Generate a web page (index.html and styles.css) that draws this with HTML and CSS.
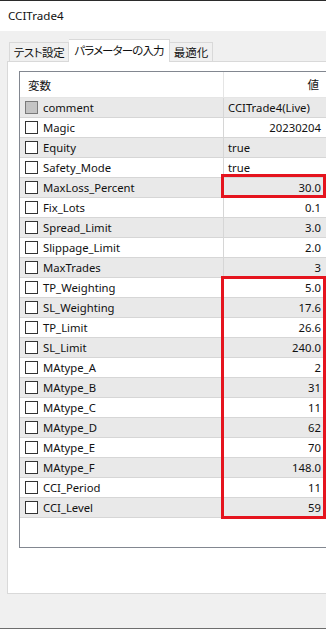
FILE: index.html
```html
<!DOCTYPE html>
<html lang="ja">
<head>
  <meta charset="UTF-8" />
  <title>CCITrade4</title>
  <link rel="stylesheet" href="styles.css">
</head>
<body>
  <div class="window">
    <div class="titlebar">CCITrade4</div>
    <div class="tabs">
      <div class="tab tab-test">テスト設定</div>
      <div class="tab tab-param active">パラメーターの入力</div>
      <div class="tab tab-opt">最適化</div>
    </div>
    <div class="panel">
      <div class="list">
        <div class="list-head">
          <div class="col-name">変数</div>
          <div class="col-value">値</div>
        </div>
        <div class="row alt"><div class="col-name"><span class="check on"></span>comment</div><div class="col-value left">CCITrade4(Live)</div></div>
        <div class="row"><div class="col-name"><span class="check"></span>Magic</div><div class="col-value">20230204</div></div>
        <div class="row alt"><div class="col-name"><span class="check"></span>Equity</div><div class="col-value left">true</div></div>
        <div class="row"><div class="col-name"><span class="check"></span>Safety_Mode</div><div class="col-value left">true</div></div>
        <div class="row alt"><div class="col-name"><span class="check"></span>MaxLoss_Percent</div><div class="col-value">30.0</div></div>
        <div class="row"><div class="col-name"><span class="check"></span>Fix_Lots</div><div class="col-value">0.1</div></div>
        <div class="row alt"><div class="col-name"><span class="check"></span>Spread_Limit</div><div class="col-value">3.0</div></div>
        <div class="row"><div class="col-name"><span class="check"></span>Slippage_Limit</div><div class="col-value">2.0</div></div>
        <div class="row alt"><div class="col-name"><span class="check"></span>MaxTrades</div><div class="col-value">3</div></div>
        <div class="row"><div class="col-name"><span class="check"></span>TP_Weighting</div><div class="col-value">5.0</div></div>
        <div class="row alt"><div class="col-name"><span class="check"></span>SL_Weighting</div><div class="col-value">17.6</div></div>
        <div class="row"><div class="col-name"><span class="check"></span>TP_Limit</div><div class="col-value">26.6</div></div>
        <div class="row alt"><div class="col-name"><span class="check"></span>SL_Limit</div><div class="col-value">240.0</div></div>
        <div class="row"><div class="col-name"><span class="check"></span>MAtype_A</div><div class="col-value">2</div></div>
        <div class="row alt"><div class="col-name"><span class="check"></span>MAtype_B</div><div class="col-value">31</div></div>
        <div class="row"><div class="col-name"><span class="check"></span>MAtype_C</div><div class="col-value">11</div></div>
        <div class="row alt"><div class="col-name"><span class="check"></span>MAtype_D</div><div class="col-value">62</div></div>
        <div class="row"><div class="col-name"><span class="check"></span>MAtype_E</div><div class="col-value">70</div></div>
        <div class="row alt"><div class="col-name"><span class="check"></span>MAtype_F</div><div class="col-value">148.0</div></div>
        <div class="row"><div class="col-name"><span class="check"></span>CCI_Period</div><div class="col-value">11</div></div>
        <div class="row alt"><div class="col-name"><span class="check"></span>CCI_Level</div><div class="col-value">59</div></div>

        <div class="mark mark-one"></div>
        <div class="mark mark-two"></div>
      </div>
    </div>
  </div>
</body>
</html>
```

FILE: styles.css
```css
*{
  margin: 0;
  padding: 0;
  box-sizing: border-box;
}
html, body{
  width: 326px;
  height: 629px;
  overflow: hidden;
}
body{
  font-family: "Noto Sans", "Noto Sans CJK JP", sans-serif;
  font-size: 11.3px;
  color: #111;
  background: #f0f0f0;
}
.window{
  height: 629px;
  border-top: 1px solid #2b2b2b;
  border-bottom: 1px solid #6d6d6d;
}
.titlebar{
  height: 30px;
  background: #fff;
  padding-left: 8px;
  line-height: 30px;
  font-size: 11.6px;
}
.tabs{
  height: 30px;
  display: flex;
  align-items: flex-end;
  padding-left: 9px;
  font-family: "Noto Sans CJK JP", sans-serif;
  font-size: 11.5px;
  font-feature-settings: "palt";
}
.tab{
  height: 19px;
  line-height: 18px;
  text-align: center;
  white-space: nowrap;
  background: #f0f0f0;
  border: 1px solid #d9d9d9;
  border-bottom: none;
}
.tab-test{
  width: 60px;
  letter-spacing: -0.4px;
}
.tab-param{
  width: 101px;
  letter-spacing: -0.9px;
}
.tab-opt{
  width: 43px;
  border-left: none;
}
.tab.active{
  height: 23px;
  margin-bottom: -1px;
  line-height: 20px;
  background: #fff;
  border-left: none;
  position: relative;
  z-index: 1;
}
.panel{
  margin-left: 7px;
  width: 330px;
  height: 533px;
  background: #fff;
  border: 1px solid #d9d9d9;
  padding: 9px 0 0 11px;
}
.list{
  position: relative;
  width: 313px;
  height: 477px;
  border: 1px solid #828790;
  background: #fff;
}
.list-head, .row{
  display: flex;
}
.list-head{
  height: 26px;
  line-height: 24px;
  border-bottom: 1px solid #e5e5e5;
  font-family: "Noto Sans CJK JP", sans-serif;
  font-size: 11.5px;
}
.row{
  height: 20px;
  line-height: 19px;
  border-bottom: 1px solid #d6d6d6;
}
.row.alt{
  background: #e9e9e9;
}
.col-name{
  width: 204px;
  padding-left: 5px;
  border-right: 1px solid #d6d6d6;
  display: flex;
  align-items: center;
  white-space: nowrap;
}
.list-head .col-name{
  padding-left: 8px;
  border-right-color: #e5e5e5;
}
.col-value{
  flex: 1;
  text-align: right;
  padding: 0 10px 0 4px;
  white-space: nowrap;
}
.list-head .col-value{
  padding-right: 12px;
}
.col-value.left{
  text-align: left;
}
.check{
  width: 13px;
  height: 13px;
  border: 1px solid #333;
  background: #fff;
  margin-right: 5px;
  flex: none;
}
.check.on{
  background: #c4c4c4;
  border-color: #7a7a7a;
}
.mark{
  position: absolute;
  left: 201px;
  width: 105px;
  border: 3px solid #e5141e;
}
.mark-one{
  top: 102px;
  height: 24px;
}
.mark-two{
  top: 204px;
  height: 243px;
}
```
